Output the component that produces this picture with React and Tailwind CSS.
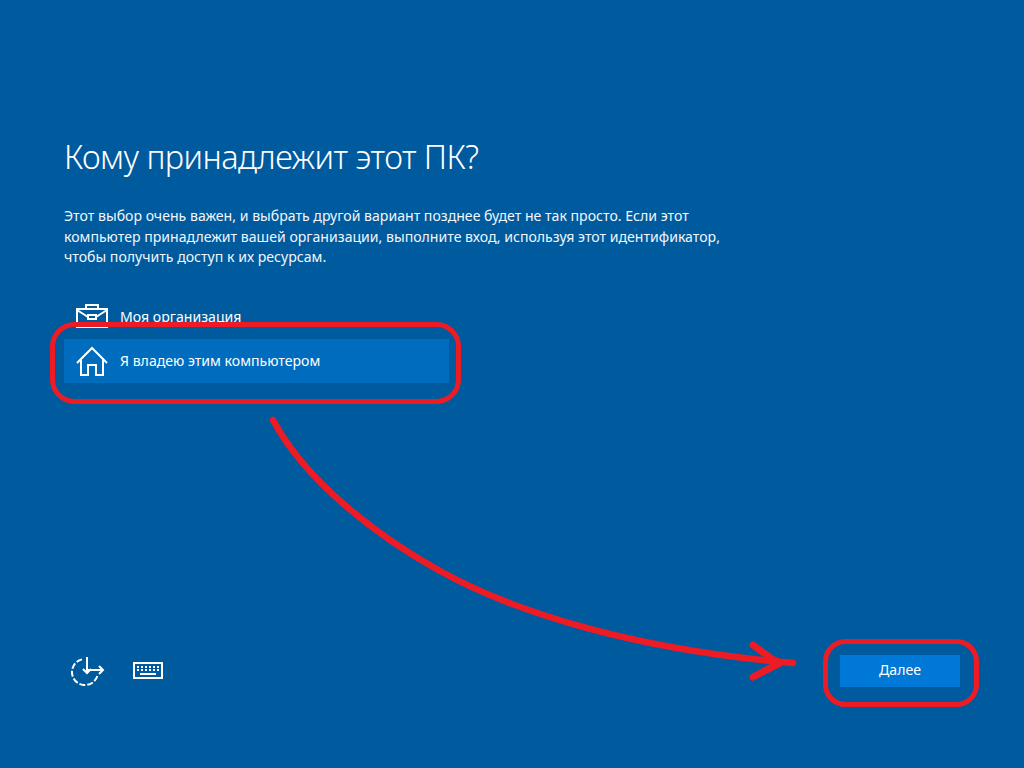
const RED = '#ed1c24';

function BriefcaseIcon() {
  return (
    <svg width="32" height="32" viewBox="0 0 32 32" fill="none" stroke="#fff" strokeWidth="2" className="shrink-0">
      <path d="M1 8h30v18H1z" />
      <path d="M10 8V4h12v4" />
      <path d="M1 9l11 7M31 9l-11 7" />
      <path d="M12 14h8v4h-8z" />
    </svg>
  );
}

function HomeIcon() {
  return (
    <svg width="32" height="32" viewBox="0 0 32 32" fill="none" stroke="#fff" strokeWidth="2" className="shrink-0">
      <path d="M1 18L16 3l15 15" />
      <path d="M5 14v16h7V20h8v10h7V14" />
    </svg>
  );
}

function AccessIcon() {
  return (
    <svg width="36" height="32" viewBox="0 0 36 32" fill="none" stroke="#fff" strokeWidth="2" className="shrink-0">
      <path d="M12 4.400A13 13 0 1 0 27.500 20.500" strokeDasharray="6 2" />
      <path d="M17 2v15M13 14l4 4 4-4" />
      <path d="M18 15h15M29 11l4 4-4 4" />
    </svg>
  );
}

function KeyboardIcon() {
  return (
    <svg width="30" height="17" viewBox="0 0 30 17" fill="none" className="shrink-0">
      <rect x="1" y="1" width="28" height="15" stroke="#fff" strokeWidth="2" />
      <path
        d="M4 4h2v2H4zM8 4h2v2H8zM12 4h2v2h-2zM16 4h2v2h-2zM20 4h2v2h-2zM24 4h2v2h-2zM4 7h2v2H4zM8 7h2v2H8zM12 7h2v2h-2zM16 7h2v2h-2zM20 7h2v2h-2zM24 7h2v2h-2zM7 11h16v2H7z"
        fill="#fff"
      />
    </svg>
  );
}

// red marks drawn over the screenshot
function Annotations() {
  return (
    <svg width="1024" height="768" viewBox="0 0 1024 768" fill="none" className="absolute inset-0 pointer-events-none">
      <rect x="52.500" y="324.500" width="406" height="77" rx="22" stroke={RED} strokeWidth="5" />
      <rect x="825.500" y="641.500" width="151" height="63" rx="20" stroke={RED} strokeWidth="5" />
      <path
        d="M273 420C305 480 375 535 440 571C520 615 640 650 793 663"
        stroke={RED}
        strokeWidth="6.500"
        strokeLinecap="round"
      />
      <path d="M753 645L772 659L780 663L772 667L753 677" stroke={RED} strokeWidth="7" strokeLinecap="round" strokeLinejoin="round" />
    </svg>
  );
}

export default function App() {
  return (
    <div className="relative w-[1024px] h-[768px] overflow-hidden bg-[#005a9e] text-white font-['Noto_Sans',sans-serif] flex flex-col">
      <main className="flex-1 pt-[133px] pl-16">
        <h1 className="text-[32.5px] leading-[48px] font-light tracking-[-0.55px]">Кому принадлежит этот ПК?</h1>
        <p className="mt-[25px] w-[682px] text-[14.1px] leading-[20.5px] text-[#f2f7fb]">
          Этот выбор очень важен, и выбрать другой вариант позднее будет не так просто. Если этот компьютер принадлежит
          вашей организации, выполните вход, используя этот идентификатор, чтобы получить доступ к их ресурсам.
        </p>
        <ul className="mt-[27px] w-[385px]">
          <li className="h-11 flex items-center gap-3 pl-3 text-[14.1px]">
            <BriefcaseIcon />
            <span>Моя организация</span>
          </li>
          <li className="h-11 flex items-center gap-3 pl-3 text-[14.1px] bg-[#006cbe]">
            <HomeIcon />
            <span>Я владею этим компьютером</span>
          </li>
        </ul>
      </main>
      <footer className="h-[113px] flex justify-between pl-[70px] pr-16">
        <div className="flex items-start gap-[27px]">
          <AccessIcon />
          <div className="pt-[7px]">
            <KeyboardIcon />
          </div>
        </div>
        <button className="w-[120px] h-8 pb-[2px] bg-[#0078d7] text-[14.1px]">Далее</button>
      </footer>
      <Annotations />
    </div>
  );
}
